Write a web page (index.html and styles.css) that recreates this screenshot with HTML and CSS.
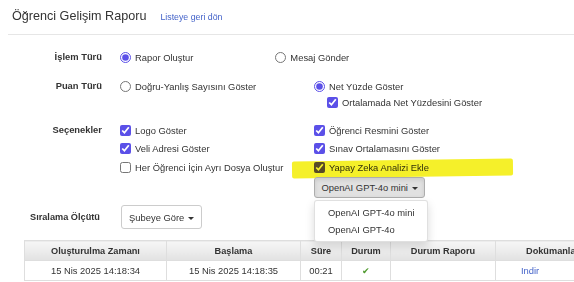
FILE: index.html
```html
<!DOCTYPE html>
<html lang="tr">
<head>
    <meta charset="UTF-8">
    <meta name="viewport" content="width=device-width, initial-scale=1.0">
    <title>Öğrenci Gelişim Raporu</title>
    <link rel="stylesheet" href="styles.css">
</head>
<body>
    <div class="page-header">
        <h1>Öğrenci Gelişim Raporu</h1>
        <a href="#" class="back-link">Listeye geri dön</a>
    </div>

    <div class="report-form">
        <div class="form-row row-islem">
            <div class="form-label">İşlem Türü</div>
            <div class="opts-inline">
                <label class="opt"><input type="radio" name="islem" checked> Rapor Oluştur</label>
                <label class="opt"><input type="radio" name="islem"> Mesaj Gönder</label>
            </div>
        </div>

        <div class="form-row row-puan">
            <div class="form-label">Puan Türü</div>
            <div class="opts-grid">
                <label class="opt"><input type="radio" name="puan"> Doğru-Yanlış Sayısını Göster</label>
                <div class="opt-group">
                    <label class="opt"><input type="radio" name="puan" checked> Net Yüzde Göster</label>
                    <label class="opt sub-opt"><input type="checkbox" checked> Ortalamada Net Yüzdesini Göster</label>
                </div>
            </div>
        </div>

        <div class="form-row row-secenek">
            <div class="form-label">Seçenekler</div>
            <div class="opts-grid opts-rows">
                <label class="opt"><input type="checkbox" checked> Logo Göster</label>
                <label class="opt"><input type="checkbox" checked> Öğrenci Resmini Göster</label>
                <label class="opt"><input type="checkbox" checked> Veli Adresi Göster</label>
                <label class="opt"><input type="checkbox" checked> Sınav Ortalamasını Göster</label>
                <label class="opt"><input type="checkbox"> Her Öğrenci İçin Ayrı Dosya Oluştur</label>
                <label class="opt ai-opt"><input type="checkbox" checked> Yapay Zeka Analizi Ekle<span class="marker"></span></label>
                <div></div>
                <div class="dropdown">
                    <button class="btn btn-gray">OpenAI GPT-4o mini <span class="caret"></span></button>
                    <ul class="dropdown-menu">
                        <li>OpenAI GPT-4o mini</li>
                        <li>OpenAI GPT-4o</li>
                    </ul>
                </div>
            </div>
        </div>
    </div>

    <div class="sort-row">
        <div class="sort-label">Sıralama Ölçütü</div>
        <button class="btn btn-white">Şubeye Göre <span class="caret"></span></button>
    </div>

    <table class="report-table">
        <thead>
            <tr>
                <th class="c-time">Oluşturulma Zamanı</th>
                <th class="c-start">Başlama</th>
                <th class="c-dur">Süre</th>
                <th class="c-state">Durum</th>
                <th class="c-report">Durum Raporu</th>
                <th class="c-doc">Dokümanlar</th>
            </tr>
        </thead>
        <tbody>
            <tr>
                <td>15 Nis 2025 14:18:34</td>
                <td>15 Nis 2025 14:18:35</td>
                <td>00:21</td>
                <td class="ok">&#10004;</td>
                <td></td>
                <td class="doc-cell"><a href="#">Indir</a></td>
            </tr>
        </tbody>
    </table>
</body>
</html>
```

FILE: styles.css
```css
* {
    box-sizing: border-box;
}

body {
    margin: 0;
    font-family: 'Liberation Sans', Arial, sans-serif;
    font-size: 9.4px;
    color: #333;
    background: #fff;
    overflow: hidden;
}

a {
    color: #4463c9;
    text-decoration: none;
}

.page-header {
    display: flex;
    align-items: baseline;
    gap: 14px;
    margin-left: 8px;
    padding: 9px 0 11px 4px;
    border-bottom: 1px solid #e6e6e6;
}

.page-header h1 {
    margin: 0;
    font-size: 12.6px;
    font-weight: normal;
    color: #333;
}

.back-link {
    font-size: 8.8px;
}

.report-form {
    padding-top: 13px;
}

.form-row {
    display: flex;
}

.form-label {
    width: 102px;
    text-align: right;
    font-weight: bold;
    line-height: 18px;
    margin-right: 18px;
}

.opt {
    display: flex;
    align-items: center;
    height: 18px;
    gap: 4px;
    white-space: nowrap;
}

.opt input {
    margin: 0;
    width: 11px;
    height: 11px;
    accent-color: #5b50e8;
}

.opts-inline {
    display: flex;
    gap: 82px;
}

.row-puan {
    margin-top: 11px;
}

.opts-grid {
    display: grid;
    grid-template-columns: 194px auto;
}

.sub-opt {
    margin-left: 13px;
    margin-top: -2px;
}

.row-secenek {
    margin-top: 10px;
}

.opts-rows {
    grid-auto-rows: 18.5px;
}

.ai-opt {
    position: relative;
}

.marker {
    position: absolute;
    left: -22px;
    top: 2px;
    width: 221px;
    height: 17px;
    background: #f5f02a;
    mix-blend-mode: multiply;
    border-radius: 2px;
    transform: rotate(-0.8deg);
    pointer-events: none;
}

.dropdown {
    position: relative;
}

.btn {
    font-family: inherit;
    color: #333;
    border-radius: 3px;
    cursor: pointer;
    white-space: nowrap;
}

.btn-gray {
    height: 21px;
    width: 111px;
    padding: 0;
    font-size: 9.4px;
    background: #e1e1e1;
    border: 1px solid #adadad;
    box-shadow: inset 0 2px 4px rgba(0, 0, 0, 0.1);
}

.caret {
    display: inline-block;
    width: 0;
    height: 0;
    margin-left: 1px;
    vertical-align: middle;
    border-top: 3px solid #333;
    border-left: 3px solid transparent;
    border-right: 3px solid transparent;
}

.dropdown-menu {
    position: absolute;
    top: 23px;
    left: 0;
    width: 114px;
    margin: 0;
    padding: 3px 0;
    list-style: none;
    background: #fff;
    border: 1px solid rgba(0, 0, 0, 0.12);
    border-radius: 3px;
    box-shadow: 0 4px 10px rgba(0, 0, 0, 0.15);
    z-index: 10;
}

.dropdown-menu li {
    padding: 0 13px;
    line-height: 17px;
    font-size: 9.4px;
    white-space: nowrap;
}

.sort-row {
    display: flex;
    align-items: center;
    margin-top: 10px;
    padding-left: 30px;
}

.sort-label {
    font-weight: bold;
    width: 91px;
    font-size: 9.2px;
}

.btn-white {
    height: 24px;
    width: 81px;
    background: #fff;
    border: 1px solid #ccc;
    font-size: 9.4px;
}

.report-table {
    margin: 11px 0 0 24px;
    border-collapse: collapse;
    table-layout: fixed;
    width: 600px;
}

.report-table th,
.report-table td {
    height: 20px;
    padding: 0 4px;
    text-align: center;
    border: 1px solid #dedede;
    white-space: nowrap;
    overflow: hidden;
}

.report-table th {
    font-weight: bold;
    font-size: 9.2px;
    background: linear-gradient(#f6f6f6, #e2e2e2);
}

.report-table td {
    font-size: 9.4px;
}

.report-table th.c-doc {
    text-align: left;
    padding-left: 30px;
}

.report-table td.doc-cell {
    text-align: left;
    padding-left: 25px;
}

.c-time { width: 142px; }
.c-start { width: 134px; }
.c-dur { width: 41px; }
.c-state { width: 49px; }
.c-report { width: 105px; }
.c-doc { width: 129px; }

.ok {
    color: #4f9a2e;
}
```
